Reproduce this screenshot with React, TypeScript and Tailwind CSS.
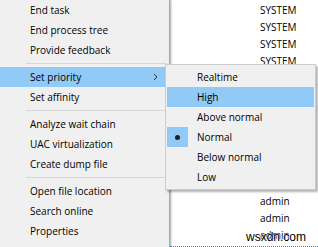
import React from 'react';

type Entry = { label: string; sep?: false; active?: boolean; sub?: boolean; muted?: boolean } | { sep: true };

const MENU: Entry[] = [
  { label: 'End task' },
  { label: 'End process tree' },
  { label: 'Provide feedback' },
  { sep: true },
  { label: 'Set priority', active: true, sub: true },
  { label: 'Set affinity' },
  { sep: true },
  { label: 'Analyze wait chain' },
  { label: 'UAC virtualization' },
  { label: 'Create dump file' },
  { sep: true },
  { label: 'Open file location' },
  { label: 'Search online' },
  { label: 'Properties' },
  { label: 'Go to service(s)', muted: true },
];

const PRIORITIES = ['Realtime', 'High', 'Above normal', 'Normal', 'Below normal', 'Low'];

function Chevron() {
  return (
    <svg width="5" height="8" viewBox="0 0 5 8" className="mr-[8px]">
      <path d="M1 1 L4 4 L1 7" fill="none" stroke="#333" strokeWidth="1" />
    </svg>
  );
}

export default function App() {
  return (
    <div className="relative flex h-[247px] w-[318px] overflow-hidden bg-white font-['Open_Sans','Noto_Sans',sans-serif] text-[10px] text-black">
      {/* main context menu */}
      <div className="relative z-10 flex w-[170px] shrink-0 flex-col border-r border-[#a8a8a8] bg-[#f0f0f0] shadow-[1px_0_2px_rgba(0,0,0,0.35)]">
        {MENU.map((m, i) =>
          m.sep ? (
            <div key={i} className="flex h-[7px] shrink-0 items-center pl-[26px] pr-[2px]">
              <div className="h-px w-full bg-[#d7d7d7]" />
            </div>
          ) : (
            <div
              key={i}
              className={`mr-[3px] flex h-[20px] shrink-0 items-center justify-between pl-[30px] ${
                m.active ? 'bg-[#91c9f7]' : ''
              } ${m.muted ? 'text-[#6d6d6d]' : ''}`}
            >
              <span>{m.label}</span>
              {m.sub && <Chevron />}
            </div>
          )
        )}
      </div>

      {/* process list behind the menu */}
      <div className="flex flex-1 flex-col pl-[90px] pt-[1.5px]">
        {['SYSTEM', 'SYSTEM', 'SYSTEM', 'SYSTEM'].map((u, i) => (
          <div key={i} className="flex h-[17px] items-center">{u}</div>
        ))}
        <div className="mt-[123px] flex flex-col">
          {['admin', 'admin', 'admin'].map((u, i) => (
            <div key={i} className="flex h-[17px] items-center">{u}</div>
          ))}
        </div>
        <div className="-ml-[90px] mt-[2px] border-t border-dotted border-[#3b7fd6]" />
      </div>

      {/* priority submenu */}
      <div className="absolute left-[165px] top-[64px] z-20 flex w-[151px] flex-col border border-[#cccccc] bg-[#f0f0f0] px-px py-[2px] shadow-[2px_2px_2px_rgba(0,0,0,0.3)]">
        {PRIORITIES.map((p) => (
          <div key={p} className={`flex h-[20px] items-center ${p === 'High' ? 'bg-[#91c9f7]' : ''}`}>
            <div className="flex h-full w-[30px] shrink-0">
              {p === 'Normal' && (
                <div className="flex h-full w-[21px] items-center justify-center bg-[#91c9f7]">
                  <span className="h-[5px] w-[5px] rounded-full bg-[#1f1f1f]" />
                </div>
              )}
            </div>
            <span>{p}</span>
          </div>
        ))}
      </div>

      {/* watermark */}
      <span className="absolute bottom-[1px] right-[12px] z-30 font-['Liberation_Sans',Arial,sans-serif] text-[12px] text-black [text-shadow:0_0_2px_#fff,0_0_2px_#fff]">
        wsxdn.com
      </span>
    </div>
  );
}
